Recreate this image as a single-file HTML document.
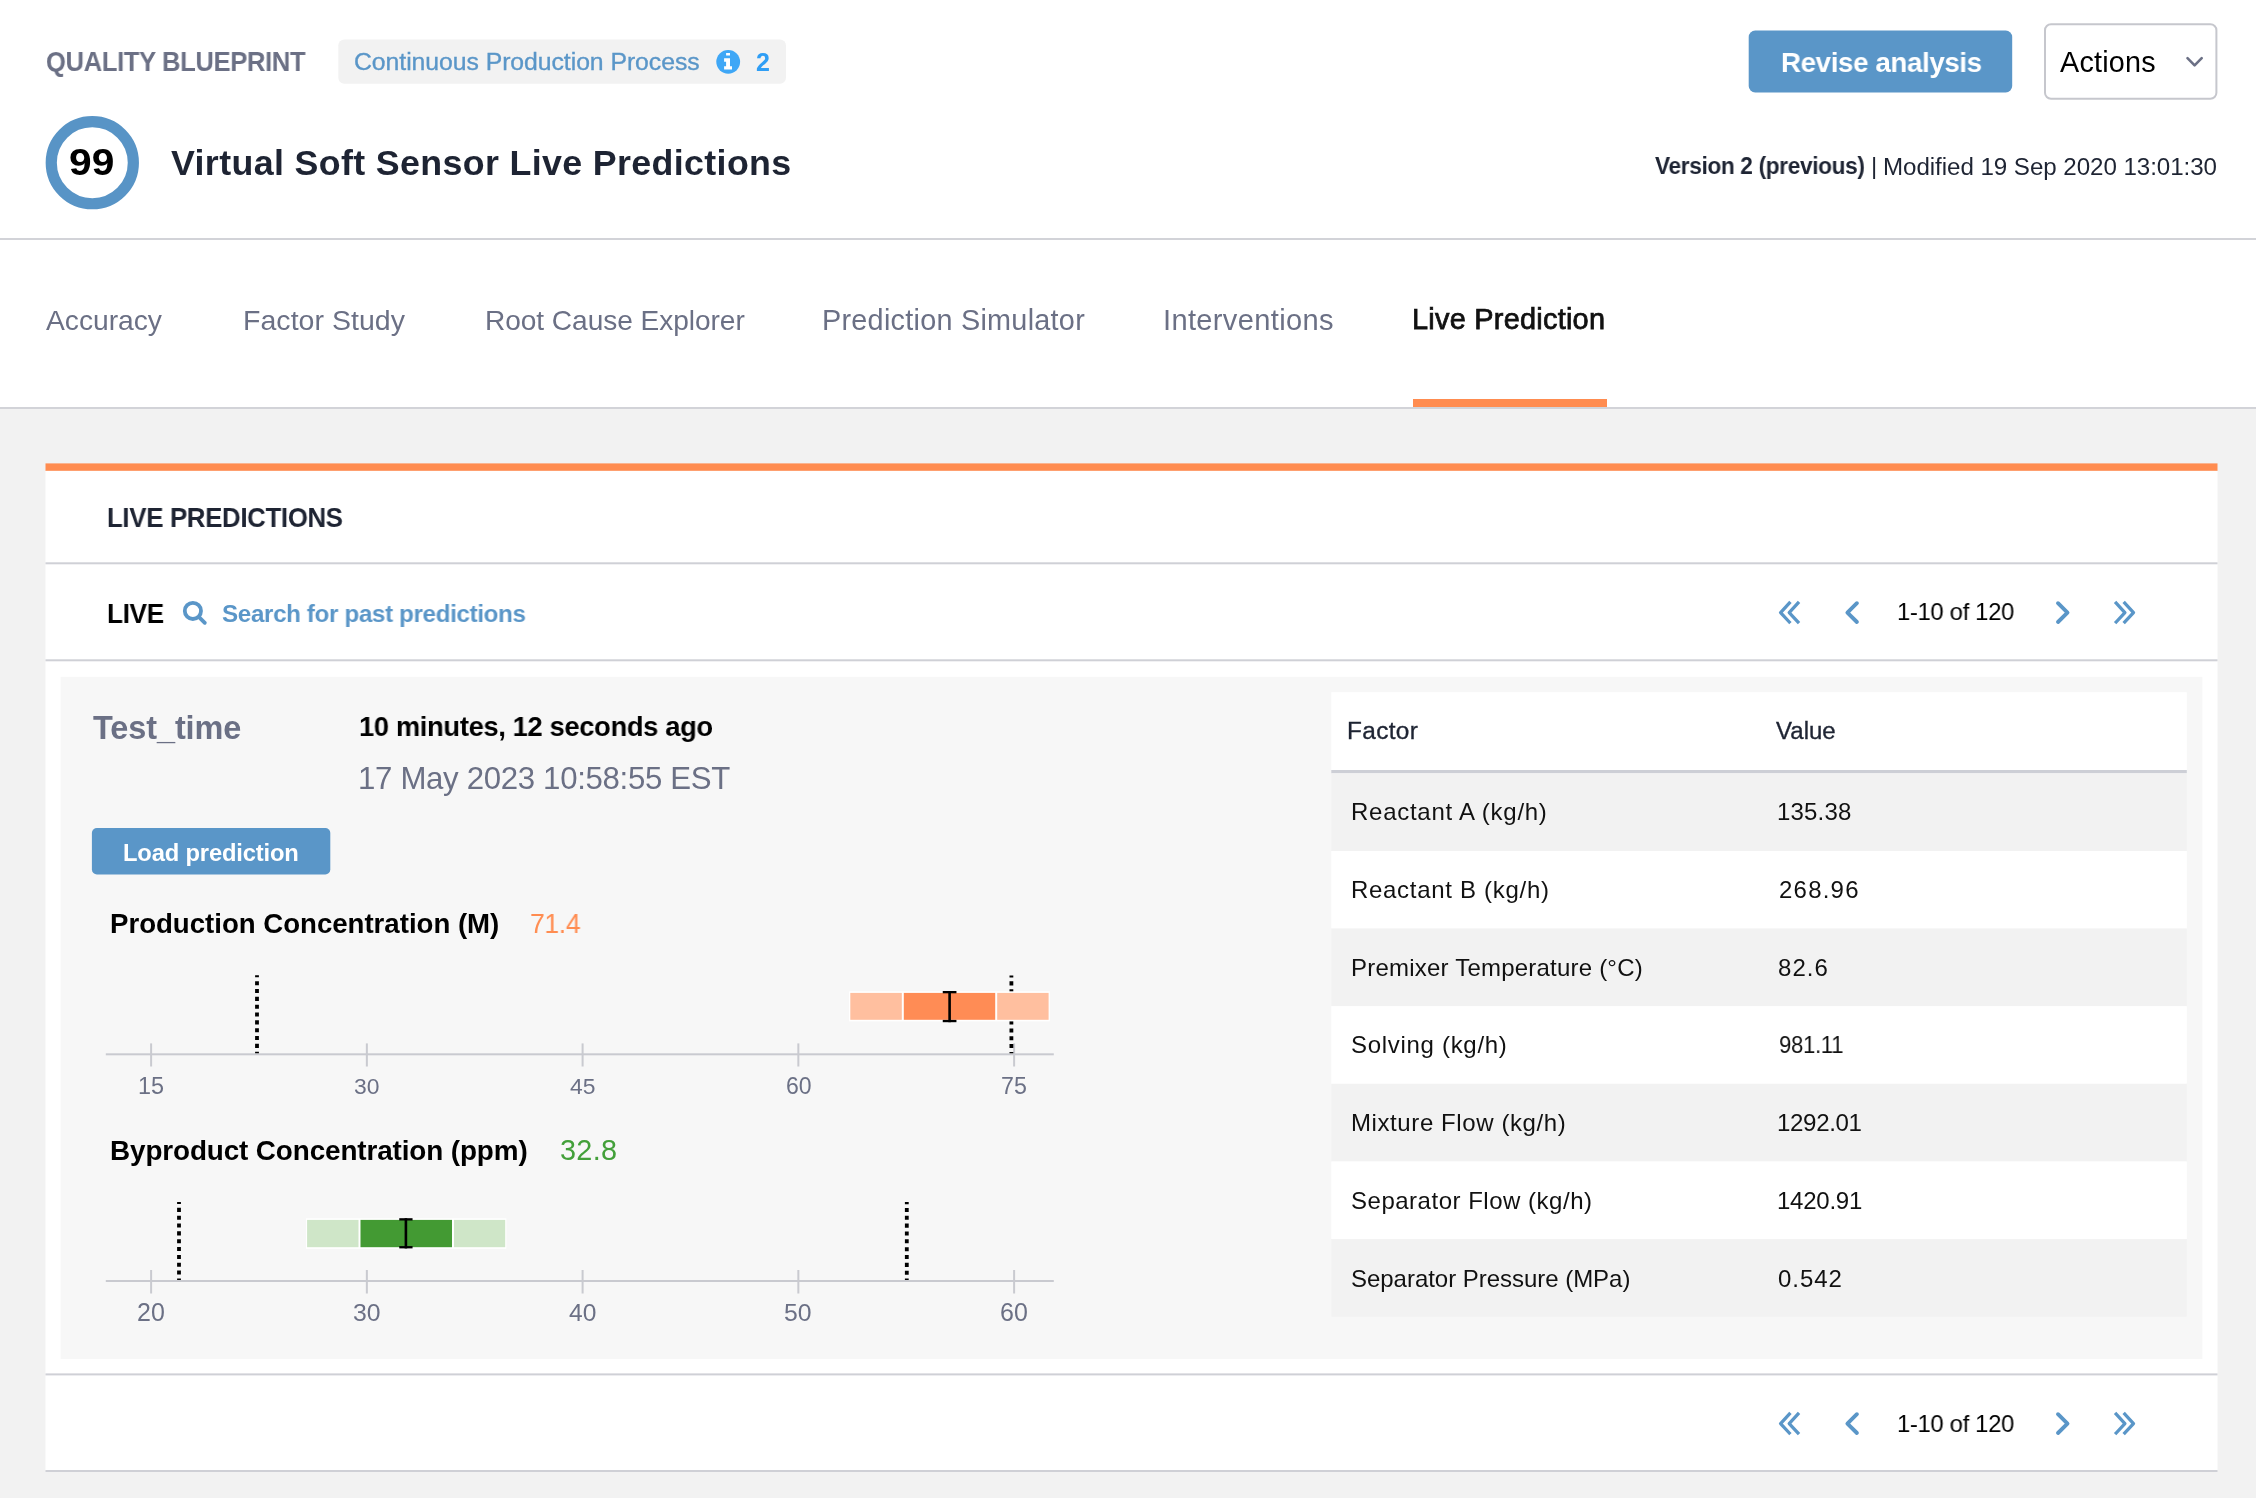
<!DOCTYPE html>
<html><head><meta charset="utf-8"><title>Virtual Soft Sensor Live Predictions</title>
<style>
html,body{margin:0;padding:0;}
body{width:2256px;height:1498px;position:relative;overflow:hidden;background:#f2f2f2;font-family:"Liberation Sans", sans-serif;}
.s{position:absolute;left:0;top:0;}
.t{position:absolute;white-space:nowrap;line-height:1;transform-origin:0 0;will-change:transform;}
</style></head><body>
<svg class="s" width="2256" height="1498" viewBox="0 0 2256 1498"><rect x="0" y="0" width="2256" height="238" fill="#fff" rx="0" />
<rect x="0" y="238" width="2256" height="2" fill="#d2d3d8" rx="0" />
<rect x="0" y="240" width="2256" height="167" fill="#fff" rx="0" />
<rect x="0" y="407" width="2256" height="2" fill="#d2d3d8" rx="0" />
<rect x="1413" y="399" width="194" height="8" fill="#ff8c50" rx="0" />
<rect x="338.3" y="39.4" width="447.7" height="44.4" fill="#f2f2f2" rx="6" />
<circle cx="728.2" cy="61.8" r="11.9" fill="#3fa7f6"/>
<path d="M726.1 52.9h3.9v2.7h-3.9z M724.1 58.3h5.9v7.9h2v3.4h-7.9v-3.4h2v-4.5h-2z" fill="#fff"/>
<circle cx="92.3" cy="162.7" r="41.05" fill="none" stroke="#5894c6" stroke-width="11.2"/>
<rect x="1748.7" y="30.6" width="263.5" height="61.9" fill="#5a96c8" rx="6.5" />
<rect x="2045" y="24.3" width="171.4" height="74.4" fill="#fff" rx="6" stroke="#c6c7cd" stroke-width="2"/>
<path d="M2187.5 58.2 L2194.6 65.3 L2201.7 58.2" fill="none" stroke="#6b7085" stroke-width="2.6" stroke-linecap="round" stroke-linejoin="round"/>
<rect x="45.5" y="463.4" width="2172" height="7.5" fill="#ff8c50" rx="0" />
<rect x="45.5" y="470.9" width="2172" height="999.5" fill="#fff" rx="0" />
<rect x="45.5" y="562.3" width="2172" height="2" fill="#cfd0d6" rx="0" />
<rect x="45.5" y="659.3" width="2172" height="2" fill="#cfd0d6" rx="0" />
<rect x="45.5" y="1373.4" width="2172" height="2" fill="#cfd0d6" rx="0" />
<rect x="45.5" y="1470" width="2172" height="2" fill="#cfd0d6" rx="0" />
<circle cx="192.9" cy="610.9" r="8.1" fill="none" stroke="#5a96c8" stroke-width="3.8"/>
<line x1="199.3" y1="617.3" x2="204.8" y2="622.8" stroke="#5a96c8" stroke-width="3.8" stroke-linecap="round"/>
<path d="M1789.3 603.2 L1780.6 612.6 L1789.3 622.0 M1797.9 603.2 L1789.2 612.6 L1797.9 622.0" fill="none" stroke="#5a96c8" stroke-width="3.3" stroke-linecap="square" stroke-linejoin="round"/>
<path d="M1856.9 603.2 L1847.4 612.6 L1856.9 622.0" fill="none" stroke="#5a96c8" stroke-width="3.9" stroke-linecap="round" stroke-linejoin="round"/>
<path d="M2058.0 603.2 L2067.5 612.6 L2058.0 622.0" fill="none" stroke="#5a96c8" stroke-width="3.9" stroke-linecap="round" stroke-linejoin="round"/>
<path d="M2116.2 603.2 L2124.9 612.6 L2116.2 622.0 M2124.8 603.2 L2133.5 612.6 L2124.8 622.0" fill="none" stroke="#5a96c8" stroke-width="3.3" stroke-linecap="square" stroke-linejoin="round"/>
<path d="M1789.3 1414.2 L1780.6 1423.6 L1789.3 1433.0 M1797.9 1414.2 L1789.2 1423.6 L1797.9 1433.0" fill="none" stroke="#5a96c8" stroke-width="3.3" stroke-linecap="square" stroke-linejoin="round"/>
<path d="M1856.9 1414.2 L1847.4 1423.6 L1856.9 1433.0" fill="none" stroke="#5a96c8" stroke-width="3.9" stroke-linecap="round" stroke-linejoin="round"/>
<path d="M2058.0 1414.2 L2067.5 1423.6 L2058.0 1433.0" fill="none" stroke="#5a96c8" stroke-width="3.9" stroke-linecap="round" stroke-linejoin="round"/>
<path d="M2116.2 1414.2 L2124.9 1423.6 L2116.2 1433.0 M2124.8 1414.2 L2133.5 1423.6 L2124.8 1433.0" fill="none" stroke="#5a96c8" stroke-width="3.3" stroke-linecap="square" stroke-linejoin="round"/>
<rect x="60.6" y="676.8" width="2141.8" height="682.2" fill="#f7f7f7" rx="0" />
<rect x="91.9" y="828.1" width="238.4" height="46.3" fill="#5a96c8" rx="5" />
<rect x="1331.3" y="692.2" width="855.5" height="77.8" fill="#fff" rx="0" />
<rect x="1331.3" y="770" width="855.5" height="3.3" fill="#cdcfd6" rx="0" />
<rect x="1331.3" y="773.3" width="855.5" height="77.63" fill="#f2f2f2" rx="0" />
<rect x="1331.3" y="850.93" width="855.5" height="77.63" fill="#fff" rx="0" />
<rect x="1331.3" y="928.56" width="855.5" height="77.63" fill="#f2f2f2" rx="0" />
<rect x="1331.3" y="1006.19" width="855.5" height="77.63" fill="#fff" rx="0" />
<rect x="1331.3" y="1083.82" width="855.5" height="77.63" fill="#f2f2f2" rx="0" />
<rect x="1331.3" y="1161.45" width="855.5" height="77.63" fill="#fff" rx="0" />
<rect x="1331.3" y="1239.08" width="855.5" height="77.63" fill="#f2f2f2" rx="0" />
<rect x="105.8" y="1053.3" width="948" height="2" fill="#c9cad0"/>
<rect x="150.10" y="1043.4" width="2" height="23.09999999999991" fill="#c9cad0"/>
<rect x="365.85" y="1043.4" width="2" height="23.09999999999991" fill="#c9cad0"/>
<rect x="581.60" y="1043.4" width="2" height="23.09999999999991" fill="#c9cad0"/>
<rect x="797.35" y="1043.4" width="2" height="23.09999999999991" fill="#c9cad0"/>
<rect x="1013.10" y="1043.4" width="2" height="23.09999999999991" fill="#c9cad0"/>
<line x1="257" y1="975.3" x2="257" y2="1053.3" stroke="#000" stroke-width="3.8" stroke-dasharray="4.06 3.78" stroke-dashoffset="2"/>
<line x1="1011.4" y1="975.5" x2="1011.4" y2="1053.3" stroke="#000" stroke-width="3.8" stroke-dasharray="4.06 3.78" stroke-dashoffset="2"/>
<rect x="849.0999999999999" y="991.3" width="200.70" height="30.10" fill="#fff"/>
<rect x="850.3" y="992.9" width="51.50" height="26.90" fill="#ffbf9f"/>
<rect x="903.8" y="992.9" width="91.40" height="26.90" fill="#ff8c55"/>
<rect x="997.2" y="992.9" width="51.40" height="26.90" fill="#ffbf9f"/>
<rect x="948.30" y="991" width="2.6" height="31.20" fill="#000"/>
<rect x="942.75" y="991" width="13.7" height="2.3" fill="#000"/>
<rect x="942.75" y="1019.90" width="13.7" height="2.3" fill="#000"/>
<rect x="105.8" y="1280" width="948" height="2" fill="#c9cad0"/>
<rect x="150.10" y="1270" width="2" height="23.5" fill="#c9cad0"/>
<rect x="365.85" y="1270" width="2" height="23.5" fill="#c9cad0"/>
<rect x="581.60" y="1270" width="2" height="23.5" fill="#c9cad0"/>
<rect x="797.35" y="1270" width="2" height="23.5" fill="#c9cad0"/>
<rect x="1013.10" y="1270" width="2" height="23.5" fill="#c9cad0"/>
<line x1="179" y1="1202" x2="179" y2="1280" stroke="#000" stroke-width="3.8" stroke-dasharray="4.06 3.78" stroke-dashoffset="2"/>
<line x1="906.8" y1="1202.1" x2="906.8" y2="1280" stroke="#000" stroke-width="3.8" stroke-dasharray="4.06 3.78" stroke-dashoffset="2"/>
<rect x="305.90000000000003" y="1218.3000000000002" width="200.50" height="30.50" fill="#fff"/>
<rect x="307.1" y="1219.9" width="51.40" height="27.30" fill="#cfe6c8"/>
<rect x="360.5" y="1219.9" width="91.50" height="27.30" fill="#439a33"/>
<rect x="454" y="1219.9" width="51.20" height="27.30" fill="#cfe6c8"/>
<rect x="404.60" y="1218.2" width="2.6" height="30.20" fill="#000"/>
<rect x="399.25" y="1218.2" width="13.3" height="2.3" fill="#000"/>
<rect x="399.25" y="1246.10" width="13.3" height="2.3" fill="#000"/></svg>
<div class="t" style="left:45.60px;top:49.34px;font-size:26.76px;font-weight:bold;color:#6b7085;letter-spacing:-0.350px;transform:scaleX(0.9548)">QUALITY BLUEPRINT</div>
<div class="t" style="left:354.04px;top:50.22px;font-size:24.79px;font-weight:normal;color:#5a96c8;letter-spacing:-0.054px;-webkit-text-stroke:0.35px #5a96c8">Continuous Production Process</div>
<div class="t" style="left:756.02px;top:49.71px;font-size:25.03px;font-weight:bold;color:#2f9ef5;letter-spacing:0.000px">2</div>
<div class="t" style="left:69.23px;top:145.00px;font-size:36.50px;font-weight:bold;color:#000;letter-spacing:0.000px;transform:scaleX(1.1154)">99</div>
<div class="t" style="left:171.00px;top:145.50px;font-size:35.79px;font-weight:bold;color:#1e2433;letter-spacing:0.356px">Virtual Soft Sensor Live Predictions</div>
<div class="t" style="left:1780.67px;top:48.25px;font-size:28.18px;font-weight:bold;color:#fff;letter-spacing:-0.350px;transform:scaleX(0.9812)">Revise analysis</div>
<div class="t" style="left:2060.00px;top:47.54px;font-size:28.78px;font-weight:normal;color:#000;letter-spacing:0.220px">Actions</div>
<div class="t" style="left:1654.80px;top:155.43px;font-size:23.12px;font-weight:bold;color:#1e2433;letter-spacing:-0.350px;transform:scaleX(0.9798)">Version 2 (previous)</div>
<div class="t" style="left:1870.62px;top:154.18px;font-size:24.00px;font-weight:normal;color:#1e2433;letter-spacing:0.000px">|</div>
<div class="t" style="left:1882.61px;top:154.55px;font-size:24.15px;font-weight:normal;color:#1e2433;letter-spacing:-0.055px">Modified 19 Sep 2020 13:01:30</div>
<div class="t" style="left:46.40px;top:305.87px;font-size:28.26px;font-weight:normal;color:#6b7085;letter-spacing:-0.033px">Accuracy</div>
<div class="t" style="left:242.77px;top:305.68px;font-size:28.49px;font-weight:normal;color:#6b7085;letter-spacing:0.048px">Factor Study</div>
<div class="t" style="left:484.81px;top:306.83px;font-size:28.08px;font-weight:normal;color:#6b7085;letter-spacing:-0.050px">Root Cause Explorer</div>
<div class="t" style="left:822.35px;top:306.22px;font-size:28.80px;font-weight:normal;color:#6b7085;letter-spacing:0.266px">Prediction Simulator</div>
<div class="t" style="left:1163.33px;top:305.99px;font-size:29.07px;font-weight:normal;color:#6b7085;letter-spacing:0.343px">Interventions</div>
<div class="t" style="left:1412.14px;top:305.31px;font-size:28.93px;font-weight:normal;color:#111;letter-spacing:0.237px;-webkit-text-stroke:0.75px #111">Live Prediction</div>
<div class="t" style="left:106.79px;top:505.18px;font-size:26.96px;font-weight:bold;color:#1e2433;letter-spacing:-0.350px;transform:scaleX(0.9581)">LIVE PREDICTIONS</div>
<div class="t" style="left:106.77px;top:600.53px;font-size:27.01px;font-weight:bold;color:#000;letter-spacing:-0.350px;transform:scaleX(0.9684)">LIVE</div>
<div class="t" style="left:221.82px;top:601.68px;font-size:24.24px;font-weight:bold;color:#5a96c8;letter-spacing:-0.350px;transform:scaleX(0.9975)">Search for past predictions</div>
<div class="t" style="left:1897.31px;top:599.94px;font-size:24.17px;font-weight:normal;color:#000;letter-spacing:-0.350px;transform:scaleX(0.9883)">1-10 of 120</div>
<div class="t" style="left:1897.31px;top:1411.54px;font-size:24.17px;font-weight:normal;color:#000;letter-spacing:-0.350px;transform:scaleX(0.9883)">1-10 of 120</div>
<div class="t" style="left:93.00px;top:711.53px;font-size:32.45px;font-weight:bold;color:#6b7085;letter-spacing:-0.086px">Test_time</div>
<div class="t" style="left:359.49px;top:713.23px;font-size:28.08px;font-weight:bold;color:#000;letter-spacing:-0.350px;transform:scaleX(0.9723)">10 minutes, 12 seconds ago</div>
<div class="t" style="left:358.25px;top:763.00px;font-size:31.19px;font-weight:normal;color:#6b7085;letter-spacing:-0.322px">17 May 2023 10:58:55 EST</div>
<div class="t" style="left:123.32px;top:841.51px;font-size:23.74px;font-weight:bold;color:#fff;letter-spacing:-0.158px">Load prediction</div>
<div class="t" style="left:109.67px;top:909.61px;font-size:27.63px;font-weight:bold;color:#000;letter-spacing:-0.019px">Production Concentration (M)</div>
<div class="t" style="left:529.76px;top:911.32px;font-size:26.80px;font-weight:normal;color:#ff8c50;letter-spacing:-0.350px;transform:scaleX(0.9902)">71.4</div>
<div class="t" style="left:109.66px;top:1136.61px;font-size:27.87px;font-weight:bold;color:#000;letter-spacing:-0.118px">Byproduct Concentration (ppm)</div>
<div class="t" style="left:559.70px;top:1135.80px;font-size:28.83px;font-weight:normal;color:#43a03a;letter-spacing:0.319px">32.8</div>
<div class="t" style="left:137.94px;top:1074.80px;font-size:23.39px;font-weight:normal;color:#6b7085;letter-spacing:0.000px">15</div>
<div class="t" style="left:353.90px;top:1075.23px;font-size:22.88px;font-weight:normal;color:#6b7085;letter-spacing:0.000px">30</div>
<div class="t" style="left:570.26px;top:1075.23px;font-size:22.88px;font-weight:normal;color:#6b7085;letter-spacing:0.000px">45</div>
<div class="t" style="left:785.63px;top:1075.09px;font-size:23.04px;font-weight:normal;color:#6b7085;letter-spacing:0.000px">60</div>
<div class="t" style="left:1001.22px;top:1074.95px;font-size:23.21px;font-weight:normal;color:#6b7085;letter-spacing:0.000px">75</div>
<div class="t" style="left:137.04px;top:1299.67px;font-size:24.97px;font-weight:normal;color:#6b7085;letter-spacing:0.000px">20</div>
<div class="t" style="left:352.84px;top:1300.63px;font-size:24.77px;font-weight:normal;color:#6b7085;letter-spacing:0.000px">30</div>
<div class="t" style="left:569.14px;top:1300.79px;font-size:24.59px;font-weight:normal;color:#6b7085;letter-spacing:0.000px">40</div>
<div class="t" style="left:784.34px;top:1300.63px;font-size:24.77px;font-weight:normal;color:#6b7085;letter-spacing:0.000px">50</div>
<div class="t" style="left:1000.04px;top:1299.67px;font-size:24.97px;font-weight:normal;color:#6b7085;letter-spacing:0.000px">60</div>
<div class="t" style="left:1346.69px;top:719.16px;font-size:24.39px;font-weight:normal;color:#1e2433;letter-spacing:0.342px;-webkit-text-stroke:0.35px #1e2433">Factor</div>
<div class="t" style="left:1776.00px;top:719.46px;font-size:24.03px;font-weight:normal;color:#1e2433;letter-spacing:0.022px;-webkit-text-stroke:0.35px #1e2433">Value</div>
<div class="t" style="left:1351.12px;top:799.68px;font-size:24.00px;font-weight:normal;color:#111;letter-spacing:0.735px">Reactant A (kg/h)</div>
<div class="t" style="left:1777.30px;top:799.68px;font-size:24.00px;font-weight:normal;color:#111;letter-spacing:0.173px">135.38</div>
<div class="t" style="left:1351.12px;top:878.22px;font-size:24.00px;font-weight:normal;color:#111;letter-spacing:0.698px">Reactant B (kg/h)</div>
<div class="t" style="left:1778.68px;top:878.22px;font-size:24.00px;font-weight:normal;color:#111;letter-spacing:1.218px">268.96</div>
<div class="t" style="left:1351.12px;top:955.76px;font-size:24.00px;font-weight:normal;color:#111;letter-spacing:0.214px">Premixer Temperature (°C)</div>
<div class="t" style="left:1778.05px;top:955.76px;font-size:24.00px;font-weight:normal;color:#111;letter-spacing:1.071px">82.6</div>
<div class="t" style="left:1351.25px;top:1032.99px;font-size:24.00px;font-weight:normal;color:#111;letter-spacing:0.697px">Solving (kg/h)</div>
<div class="t" style="left:1778.76px;top:1032.99px;font-size:24.00px;font-weight:normal;color:#111;letter-spacing:-0.350px;transform:scaleX(0.9236)">981.11</div>
<div class="t" style="left:1351.12px;top:1110.76px;font-size:24.00px;font-weight:normal;color:#111;letter-spacing:0.593px">Mixture Flow (kg/h)</div>
<div class="t" style="left:1777.29px;top:1110.76px;font-size:24.00px;font-weight:normal;color:#111;letter-spacing:-0.350px;transform:scaleX(1.0039)">1292.01</div>
<div class="t" style="left:1351.25px;top:1188.53px;font-size:24.00px;font-weight:normal;color:#111;letter-spacing:0.512px">Separator Flow (kg/h)</div>
<div class="t" style="left:1777.30px;top:1188.53px;font-size:24.00px;font-weight:normal;color:#111;letter-spacing:-0.247px">1420.91</div>
<div class="t" style="left:1351.25px;top:1266.92px;font-size:24.00px;font-weight:normal;color:#111;letter-spacing:-0.031px">Separator Pressure (MPa)</div>
<div class="t" style="left:1778.05px;top:1266.92px;font-size:24.00px;font-weight:normal;color:#111;letter-spacing:0.966px">0.542</div>
</body></html>
